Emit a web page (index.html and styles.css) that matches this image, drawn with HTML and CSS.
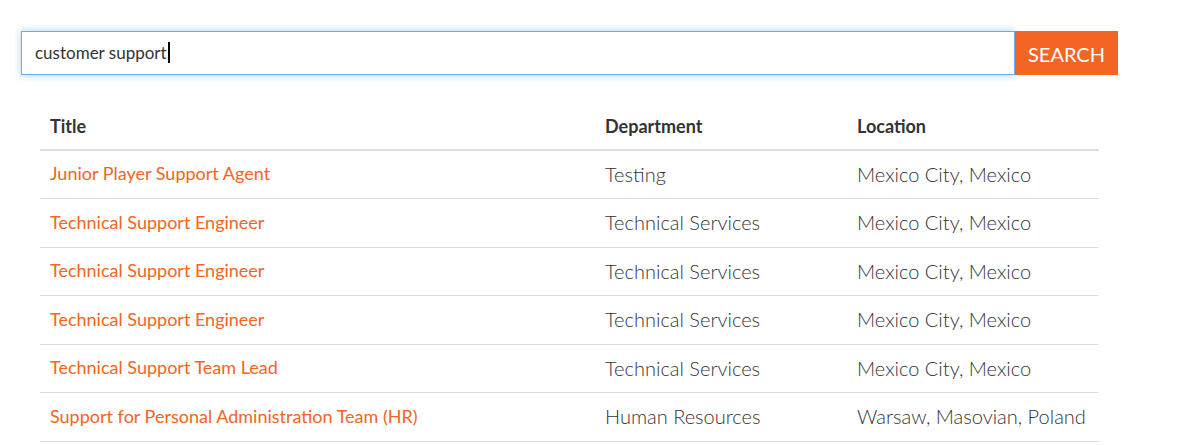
FILE: index.html
```html
<!DOCTYPE html>
<html lang="en">
<head>
    <meta charset="UTF-8">
    <meta name="viewport" content="width=device-width, initial-scale=1.0">
    <title>Jobs</title>
    <link rel="stylesheet" href="styles.css">
</head>
<body>
    <div class="jobs-container">
        <form class="search-bar" onsubmit="return false;">
            <div class="search-field">
                <span class="search-text">customer support</span><span class="caret"></span>
            </div>
            <button type="submit" class="search-button">SEARCH</button>
        </form>

        <table class="jobs-table">
            <thead>
                <tr>
                    <th class="col-title">Title</th>
                    <th class="col-dept">Department</th>
                    <th class="col-loc">Location</th>
                </tr>
            </thead>
            <tbody>
                <tr>
                    <td><a href="#">Junior Player Support Agent</a></td>
                    <td>Testing</td>
                    <td>Mexico City, Mexico</td>
                </tr>
                <tr>
                    <td><a href="#">Technical Support Engineer</a></td>
                    <td>Technical Services</td>
                    <td>Mexico City, Mexico</td>
                </tr>
                <tr>
                    <td><a href="#">Technical Support Engineer</a></td>
                    <td>Technical Services</td>
                    <td>Mexico City, Mexico</td>
                </tr>
                <tr>
                    <td><a href="#">Technical Support Engineer</a></td>
                    <td>Technical Services</td>
                    <td>Mexico City, Mexico</td>
                </tr>
                <tr>
                    <td><a href="#">Technical Support Team Lead</a></td>
                    <td>Technical Services</td>
                    <td>Mexico City, Mexico</td>
                </tr>
                <tr>
                    <td><a href="#">Support for Personal Administration Team (HR)</a></td>
                    <td>Human Resources</td>
                    <td>Warsaw, Masovian, Poland</td>
                </tr>
            </tbody>
        </table>
    </div>
</body>
</html>
```

FILE: styles.css
```css
body {
    margin: 0;
    padding: 0;
    background-color: #ffffff;
    color: #333333;
    font-family: 'Lato', 'Liberation Sans', sans-serif;
}

.jobs-container {
    padding: 31px 0 0 21px;
}

.search-bar {
    display: flex;
    margin: 0 0 29px 0;
}

.search-field {
    display: flex;
    align-items: center;
    box-sizing: border-box;
    width: 994px;
    height: 44px;
    padding: 0 13px 2px 13px;
    border: 1px solid #66aee8;
    background-color: #ffffff;
    box-shadow: 0 0 8px rgba(102, 175, 233, 0.55);
    font-size: 17px;
    font-weight: 400;
    color: #333333;
}

.caret {
    display: inline-block;
    width: 2px;
    height: 21px;
    margin-left: 1px;
    background-color: #000000;
}

.search-button {
    width: 103px;
    height: 44px;
    border: none;
    background-color: #f26522;
    color: #ffffff;
    font-family: 'Lato', 'Liberation Sans', sans-serif;
    font-size: 20px;
    font-weight: 400;
    padding: 2px 0 0 0;
    cursor: pointer;
}

.jobs-table {
    width: 1059px;
    margin-left: 19px;
    border-collapse: collapse;
}

.jobs-table th {
    text-align: left;
    font-size: 18px;
    font-weight: 700;
    color: #333333;
    padding: 11px 10px 12px 10px;
    line-height: 22px;
    border-bottom: 2px solid #dddddd;
}

.col-title {
    width: 535px;
}

.col-dept {
    width: 232px;
}

.jobs-table td {
    box-sizing: border-box;
    height: 48.5px;
    padding: 0 10px;
    line-height: 27px;
    border-bottom: 1px solid #dddddd;
    font-size: 20px;
    font-weight: 300;
    color: #333333;
    vertical-align: middle;
}

.jobs-table td a {
    display: inline-block;
    vertical-align: middle;
    line-height: 27px;
    color: #f26522;
    font-size: 18px;
    font-weight: 400;
    text-decoration: none;
    position: relative;
    top: -2px;
}

.jobs-table td a:hover {
    text-decoration: underline;
}
```
